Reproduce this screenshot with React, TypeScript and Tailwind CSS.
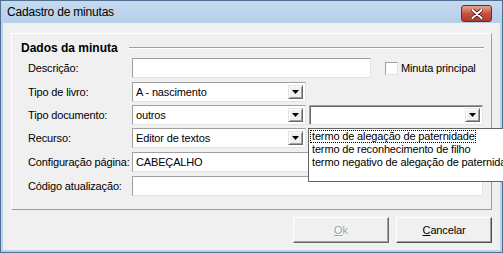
import React from "react";

const sunken =
  "border border-t-[#a0a0a0] border-l-[#a0a0a0] border-r-[#e3e3e3] border-b-[#e3e3e3] bg-white";

function Arrow() {
  return (
    <div className="absolute right-[2px] top-[2px] bottom-[2px] w-[15px] flex items-center justify-center bg-[#f0f0f0] border border-t-[#e3e3e3] border-l-[#e3e3e3] border-r-[#696969] border-b-[#696969] shadow-[inset_1px_1px_0_#ffffff,inset_-1px_-1px_0_#a0a0a0]">
      <svg width="7" height="4" viewBox="0 0 7 4">
        <polygon points="0,0 7,0 3.5,4" fill="#000" />
      </svg>
    </div>
  );
}

function Combo({ value, focus }: { value: string; focus?: boolean }) {
  return (
    <div
      className={
        focus
          ? `${sunken} relative w-[174px] h-[20px] flex items-center pl-[3px] shadow-[inset_1px_1px_0_#696969]`
          : `${sunken} relative w-[174px] h-[20px] flex items-center pl-[3px]`
      }
    >
      <span>{value}</span>
      <Arrow />
    </div>
  );
}

function Row({ label, mt, children }: { label: string; mt: string; children: React.ReactNode }) {
  return (
    <div className={`flex items-center h-[20px] ${mt}`}>
      <div className="w-[104px] whitespace-nowrap">{label}</div>
      {children}
    </div>
  );
}

export default function App() {
  return (
    <div className="relative w-[503px] h-[253px] overflow-hidden bg-white text-[11px] tracking-[-0.15px] text-black font-['Liberation_Sans',Arial,sans-serif] leading-[13px]">
      <div className="flex flex-col w-full h-full bg-[#b9d1ea] border border-[#4f6f93]">
        {/* title bar */}
        <div className="h-[22px] flex items-center px-[6px] bg-gradient-to-b from-[#c6daef] to-[#b6cee8] shrink-0">
          <span className="text-[12px] tracking-[-0.2px] text-black">Cadastro de minutas</span>
          <div className="ml-auto mt-[3px] mr-[4px] w-[31px] h-[17px] rounded-[3px] border border-[#6b2a24] bg-gradient-to-b from-[#e3a496] via-[#c8513f] to-[#b3392a] flex items-center justify-center">
            <svg width="12" height="10" viewBox="0 0 12 10">
              <path d="M1.5 1 L10.5 9 M10.5 1 L1.5 9" stroke="#3a1a16" strokeWidth="3.6" strokeLinecap="round" />
              <path d="M1.5 1 L10.5 9 M10.5 1 L1.5 9" stroke="#ffffff" strokeWidth="2" strokeLinecap="round" />
            </svg>
          </div>
        </div>

        {/* client */}
        <div className="flex-1 mx-[2px] mb-[2px] bg-[#f0f0f0] flex flex-col px-[8px] pt-[10px]">
          <div className="h-[177px] border border-t-white border-l-white border-r-[#a0a0a0] border-b-[#a0a0a0] pl-[16px] pt-[7px]">
            <div className="flex items-center h-[14px] -ml-[7px]">
              <span className="font-bold text-[12px] tracking-normal">Dados da minuta</span>
              <div className="flex-1 ml-[11px] mr-[7px] h-[2px] border-t border-t-[#a0a0a0] border-b border-b-white" />
            </div>

            <Row label="Descrição:" mt="mt-[3px]">
              <div className={`${sunken} w-[239px] h-[20px]`} />
              <div className={`${sunken} ml-[14px] w-[13px] h-[13px]`} />
              <span className="ml-[3px]">Minuta principal</span>
            </Row>
            <Row label="Tipo de livro:" mt="mt-[4px]">
              <Combo value="A - nascimento" />
            </Row>
            <Row label="Tipo documento:" mt="mt-[3px]">
              <Combo value="outros" />
              <div className="ml-[3px]">
                <Combo value="" focus />
              </div>
            </Row>
            <Row label="Recurso:" mt="mt-[3px]">
              <Combo value="Editor de textos" />
            </Row>
            <Row label="Configuração página:" mt="mt-[4px]">
              <div className={`${sunken} w-[351px] h-[20px] flex items-center pl-[3px]`}>CABEÇALHO</div>
            </Row>
            <Row label="Código atualização:" mt="mt-[4px]">
              <div className={`${sunken} w-[351px] h-[20px]`} />
            </Row>
          </div>

          <div className="flex justify-end gap-[7px] mt-[7px]">
            <button className="w-[96px] h-[26px] bg-[#f0f0f0] border border-t-white border-l-white border-r-[#696969] border-b-[#696969] shadow-[inset_-1px_-1px_0_#a0a0a0] text-[#a0a0a0] [text-shadow:1px_1px_0_#ffffff]">
              <span className="underline">O</span>k
            </button>
            <button className="w-[96px] h-[26px] bg-[#f0f0f0] border border-t-white border-l-white border-r-[#505050] border-b-[#505050] shadow-[inset_-1px_-1px_0_#a0a0a0]">
              <span className="underline">C</span>ancelar
            </button>
          </div>
        </div>
      </div>

      {/* open dropdown list */}
      <div className="absolute left-[308px] top-[128px] w-[210px] h-[54px] bg-white border border-[#646464] pt-[1px] pl-[1px]">
        <div className="h-[13px] w-[166px] pl-[2px] outline-1 outline-dotted outline-black -outline-offset-1 whitespace-nowrap">
          termo de alegação de paternidade
        </div>
        <div className="h-[13px] pl-[2px] whitespace-nowrap">termo de reconhecimento de filho</div>
        <div className="h-[13px] pl-[2px] whitespace-nowrap">termo negativo de alegação de paternidade</div>
      </div>
    </div>
  );
}
